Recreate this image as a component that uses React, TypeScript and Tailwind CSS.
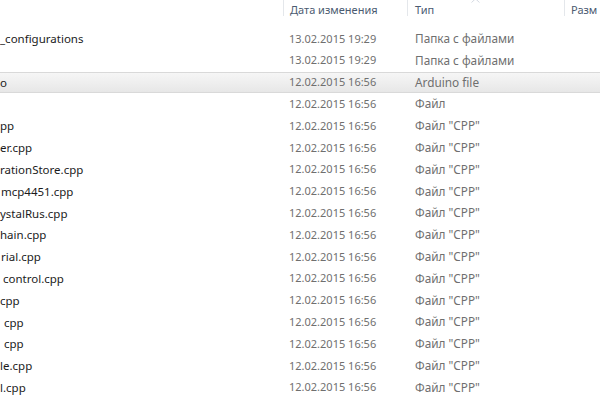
import React from "react";

type Row = {
  name: string;
  indent: number;
  date: string;
  type: string;
  selected?: boolean;
};

const rows: Row[] = [
  { name: "_configurations", indent: 0, date: "13.02.2015 19:29", type: "Папка с файлами" },
  { name: "", indent: 0, date: "13.02.2015 19:29", type: "Папка с файлами" },
  { name: "o", indent: 0, date: "12.02.2015 16:56", type: "Arduino file", selected: true },
  { name: "", indent: 0, date: "12.02.2015 16:56", type: "Файл" },
  { name: "pp", indent: 0, date: "12.02.2015 16:56", type: 'Файл "CPP"' },
  { name: "er.cpp", indent: 0, date: "12.02.2015 16:56", type: 'Файл "CPP"' },
  { name: "rationStore.cpp", indent: 0, date: "12.02.2015 16:56", type: 'Файл "CPP"' },
  { name: "mcp4451.cpp", indent: 1, date: "12.02.2015 16:56", type: 'Файл "CPP"' },
  { name: "ystalRus.cpp", indent: 0, date: "12.02.2015 16:56", type: 'Файл "CPP"' },
  { name: "hain.cpp", indent: 0, date: "12.02.2015 16:56", type: 'Файл "CPP"' },
  { name: "rial.cpp", indent: 1, date: "12.02.2015 16:56", type: 'Файл "CPP"' },
  { name: "control.cpp", indent: 3, date: "12.02.2015 16:56", type: 'Файл "CPP"' },
  { name: "cpp", indent: 0, date: "12.02.2015 16:56", type: 'Файл "CPP"' },
  { name: "cpp", indent: 4, date: "12.02.2015 16:56", type: 'Файл "CPP"' },
  { name: "cpp", indent: 4, date: "12.02.2015 16:56", type: 'Файл "CPP"' },
  { name: "le.cpp", indent: 0, date: "12.02.2015 16:56", type: 'Файл "CPP"' },
  { name: "l.cpp", indent: 0, date: "12.02.2015 16:56", type: 'Файл "CPP"' },
];

export default function App() {
  return (
    <div
      className="w-[600px] h-[400px] overflow-hidden bg-white text-[11px]"
      style={{ fontFamily: '"Noto Sans", "Open Sans", sans-serif' }}
    >
      {/* Column headers */}
      <div className="relative flex h-[28px] items-start text-[#4b5b71]">
        <div className="w-[283px] shrink-0" />
        <div className="w-[124px] shrink-0 h-[16px] border-l border-[#e4e7eb] pl-[6px] leading-[19px] whitespace-nowrap">
          Дата изменения
        </div>
        <div className="w-[157px] shrink-0 h-[16px] border-l border-[#e4e7eb] pl-[7px] leading-[19px] whitespace-nowrap">
          Тип
        </div>
        <div className="flex-1 h-[16px] border-l border-[#e4e7eb] pl-[6px] leading-[19px] whitespace-nowrap">
          Разм
        </div>
        {/* sort arrow */}
        <svg className="absolute left-[471px] top-[-2px]" width="9" height="5" viewBox="0 0 9 5">
          <path d="M0.5 4.5 L4.5 0.8 L8.5 4.5" fill="none" stroke="#d5dae2" strokeWidth="1" />
        </svg>
      </div>

      {/* File rows */}
      <div className="flex flex-col">
        {rows.map((r, i) => (
          <div
            key={i}
            className={
              r.selected
                ? "flex h-[21.8px] items-center border-y border-[#d9d9d9] bg-gradient-to-b from-[#f6f6f6] to-[#e7e7e7] whitespace-nowrap"
                : "flex h-[21.8px] items-center border-y border-transparent whitespace-nowrap"
            }
          >
            <div className="w-[283px] shrink-0 text-[#1b1b1b] text-[11.5px]" style={{ paddingLeft: r.indent }}>
              {r.name}
            </div>
            <div className="w-[125px] shrink-0 pl-[6px] text-[#6f6f6f]">{r.date}</div>
            <div className="w-[157px] shrink-0 pl-[7px] text-[#6f6f6f] text-[11.8px]">{r.type}</div>
            <div className="flex-1" />
          </div>
        ))}
      </div>
    </div>
  );
}
